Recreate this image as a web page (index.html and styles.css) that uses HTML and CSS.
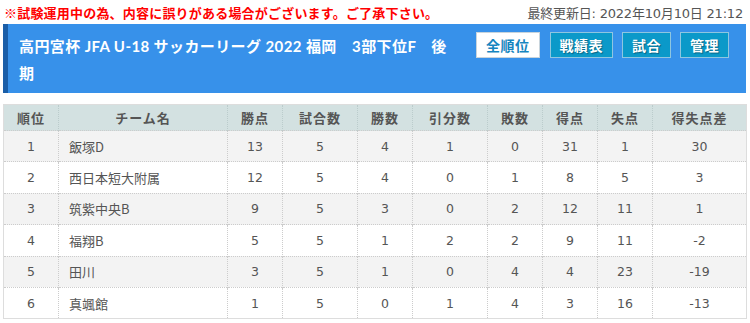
FILE: index.html
```html
<!DOCTYPE html>
<html lang="ja">
<head>
<meta charset="utf-8">
<title>順位表</title>
<link rel="stylesheet" href="styles.css">
</head>
<body>
<div class="topbar">
  <p class="notice">※試験運用中の為、内容に誤りがある場合がございます。ご了承下さい。</p>
  <p class="updated">最終更新日: 2022年10月10日 21:12</p>
</div>
<div class="header">
  <h1 class="title">高円宮杯 JFA U-18 サッカーリーグ 2022 福岡　3部下位F　後期</h1>
  <nav class="buttons">
    <a class="btn btn-active">全順位</a>
    <a class="btn">戦績表</a>
    <a class="btn">試合</a>
    <a class="btn">管理</a>
  </nav>
</div>
<table class="standings">
  <colgroup>
    <col class="c55"><col class="c169"><col class="c55"><col class="c75"><col class="c55"><col class="c75"><col class="c55"><col class="c55"><col class="c55"><col class="c94">
  </colgroup>
  <thead>
    <tr><th>順位</th><th>チーム名</th><th>勝点</th><th>試合数</th><th>勝数</th><th>引分数</th><th>敗数</th><th>得点</th><th>失点</th><th>得失点差</th></tr>
  </thead>
  <tbody>
    <tr><td>1</td><td class="team">飯塚D</td><td>13</td><td>5</td><td>4</td><td>1</td><td>0</td><td>31</td><td>1</td><td>30</td></tr>
    <tr><td>2</td><td class="team">西日本短大附属</td><td>12</td><td>5</td><td>4</td><td>0</td><td>1</td><td>8</td><td>5</td><td>3</td></tr>
    <tr><td>3</td><td class="team">筑紫中央B</td><td>9</td><td>5</td><td>3</td><td>0</td><td>2</td><td>12</td><td>11</td><td>1</td></tr>
    <tr><td>4</td><td class="team">福翔B</td><td>5</td><td>5</td><td>1</td><td>2</td><td>2</td><td>9</td><td>11</td><td>-2</td></tr>
    <tr><td>5</td><td class="team">田川</td><td>3</td><td>5</td><td>1</td><td>0</td><td>4</td><td>4</td><td>23</td><td>-19</td></tr>
    <tr><td>6</td><td class="team">真颯館</td><td>1</td><td>5</td><td>0</td><td>1</td><td>4</td><td>3</td><td>16</td><td>-13</td></tr>
  </tbody>
</table>
</body>
</html>
```
FILE: styles.css
```css
html, body {
  margin: 0;
  padding: 0;
  background: #fff;
}
body {
  padding: 0 4px 0 3px;
  font-family: "DejaVu Sans", "Noto Sans CJK JP", sans-serif;
  color: #444;
}
.topbar {
  display: flex;
  justify-content: space-between;
  align-items: center;
  height: 24px;
}
.notice {
  margin: 0 0 0 1px;
  color: #f00;
  font-weight: bold;
  font-size: 13px;
  font-family: "Noto Sans CJK JP", sans-serif;
  letter-spacing: 0.2px;
}
.updated {
  margin: 0 3px 0 0;
  color: #555;
  font-size: 13px;
  font-family: "DejaVu Sans", "Noto Sans CJK JP", sans-serif;
  letter-spacing: -0.2px;
}
.header {
  display: flex;
  align-items: flex-start;
  height: 69px;
  box-sizing: border-box;
  background: #3791ea;
  border-left: 5px solid #1a5ea8;
  padding: 0 17px 0 11px;
}
.title {
  flex: 1;
  margin: 0;
  padding-top: 9px;
  max-width: 436px;
  color: #fff;
  font-size: 15px;
  line-height: 27px;
  font-weight: bold;
  letter-spacing: 0.4px;
  font-family: "Lato", "Noto Sans CJK JP", sans-serif;
}
.buttons {
  display: flex;
  gap: 9px;
  margin-left: auto;
  padding-top: 8px;
}
.btn {
  display: flex;
  align-items: center;
  justify-content: center;
  height: 26px;
  box-sizing: border-box;
  padding: 0 9px;
  background: #0b99c9;
  border: 1px solid #8ec6e0;
  color: #fff;
  font-weight: bold;
  font-size: 14px;
  font-family: "Noto Sans CJK JP", sans-serif;
  text-shadow: 1px 1px 1px rgba(0,0,0,0.35);
  letter-spacing: 0.5px;
}
.btn-active {
  background: #fff;
  border-color: #c8d4dc;
  color: #1585c0;
  text-shadow: none;
  margin-right: 1px;
  padding: 0 9px;
}
.standings {
  margin-top: 11px;
  width: 743px;
  border-collapse: collapse;
  table-layout: fixed;
  border: 1px solid #ddd;
  font-size: 13px;
}
.c55 { width: 55px; }
.c169 { width: 169px; }
.c75 { width: 75px; }
.c94 { width: 94px; }
.standings th {
  height: 25px;
  padding: 0;
  background: #d3e1e1;
  color: #555;
  font-weight: bold;
  font-family: "Noto Sans CJK JP", sans-serif;
  letter-spacing: 1px;
  border-left: 1px dotted #bcc;
}
.standings td {
  height: 30.4px;
  padding: 0;
  text-align: center;
  color: #555;
  border-left: 1px dotted #ccc;
  border-top: 1px dotted #ccc;
  font-size: 12.5px;
}
.standings tbody tr:nth-child(odd) td {
  background: #f3f3f3;
}
.standings td.team {
  text-align: left;
  padding-left: 10px;
  font-family: "Noto Sans CJK JP", sans-serif;
  font-size: 13px;
}
```
